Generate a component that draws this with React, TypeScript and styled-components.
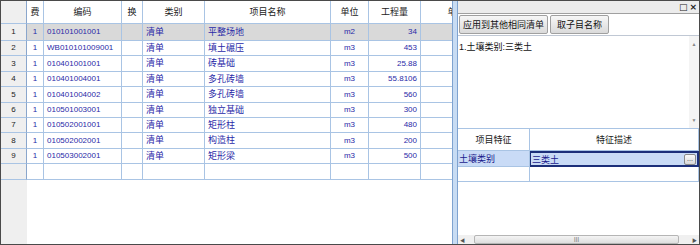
import React from "react";
import styled, { createGlobalStyle } from "styled-components";

const gridLine = "#a9c4e4";
const cellBlue = "#2a2aa8";

const GlobalStyle = createGlobalStyle`
  html, body {
    margin: 0;
    padding: 0;
    background: #ffffff;
  }
  body {
    font-family: "Liberation Sans", "Noto Sans CJK SC", sans-serif;
    font-size: 9px;
  }
`;

const Frame = styled.div`
  width: 700px;
  height: 245px;
  box-sizing: border-box;
  border: 1px solid #4a4a4a;
  display: flex;
  overflow: hidden;
  background: #ffffff;
`;

const GridPane = styled.div`
  width: 451px;
  flex-shrink: 0;
  display: flex;
  flex-direction: column;
  overflow: hidden;
`;

const Row = styled.div<{ $h: number; $selected?: boolean }>`
  display: flex;
  height: ${(p) => p.$h}px;
  flex-shrink: 0;
  background: ${(p) => (p.$selected ? "#d9d9d9" : "#ffffff")};
`;

const Cell = styled.div<{
  $w: number;
  $align?: string;
  $header?: boolean;
  $gutter?: boolean;
  $latin?: boolean;
}>`
  width: ${(p) => p.$w}px;
  flex-shrink: 0;
  box-sizing: border-box;
  border-right: 1px solid ${gridLine};
  border-bottom: 1px solid ${gridLine};
  display: flex;
  align-items: center;
  justify-content: ${(p) => p.$align || "flex-start"};
  padding: 0 3px;
  font-size: ${(p) => (p.$latin ? 8 : 9)}px;
  line-height: 1;
  white-space: nowrap;
  overflow: hidden;
  color: ${(p) => (p.$header || p.$gutter ? "#222222" : cellBlue)};
  background: ${(p) => (p.$gutter ? "#efefef" : "transparent")};
  ${(p) => (p.$gutter ? "border-right-color: #8aa6cc;" : "")}
`;

const Filler = styled.div`
  flex: 1;
  display: flex;
`;

const GutterFill = styled.div`
  width: 26px;
  background: #efefef;
`;

const Splitter = styled.div`
  width: 6px;
  flex-shrink: 0;
  background: #c8dcf3;
  border-left: 1px solid #7fa3d0;
  border-right: 1px solid #7fa3d0;
  box-sizing: border-box;
`;

const SidePane = styled.div`
  flex: 1;
  display: flex;
  flex-direction: column;
  min-width: 0;
`;

const TitleBar = styled.div`
  height: 12px;
  flex-shrink: 0;
  background: #ececec;
  border-bottom: 1px solid #a0a0a0;
  display: flex;
  justify-content: flex-end;
  align-items: center;
  gap: 2px;
  padding-right: 2px;
`;

const TitleIcon = styled.span`
  font-family: "DejaVu Sans", sans-serif;
  font-size: 9px;
  font-weight: bold;
  color: #222;
  line-height: 1;
`;

const ButtonBar = styled.div`
  height: 21px;
  flex-shrink: 0;
  display: flex;
  align-items: center;
  gap: 2px;
  padding: 0 0 0 1px;
  border-bottom: 1px solid #c0c8d4;
`;

const ToolButton = styled.div<{ $w: number }>`
  width: ${(p) => p.$w}px;
  height: 19px;
  box-sizing: border-box;
  border: 1px solid #a0a0a0;
  border-radius: 2px;
  background: linear-gradient(#f7f7f7, #dadada);
  display: flex;
  align-items: center;
  justify-content: center;
  font-size: 9px;
  white-space: nowrap;
  color: #111;
`;

const Memo = styled.div`
  height: 92px;
  flex-shrink: 0;
  display: flex;
  border-bottom: 1px solid ${gridLine};
`;

const MemoText = styled.div`
  flex: 1;
  padding: 4px 1px;
  font-size: 9px;
  color: #111;
`;

const VScroll = styled.div`
  width: 10px;
  background: #f4f4f4;
  display: flex;
  flex-direction: column;
  justify-content: space-between;
  align-items: center;
  padding: 5px 0;
  font-size: 5px;
  color: #888;
`;

const FeatRow = styled.div<{ $h: number; $selected?: boolean }>`
  display: flex;
  height: ${(p) => p.$h}px;
  flex-shrink: 0;
  background: ${(p) => (p.$selected ? "#c9dbf6" : "#ffffff")};
`;

const FeatCell = styled.div<{ $w?: number; $align?: string; $edit?: boolean; $header?: boolean }>`
  ${(p) => (p.$w ? `width: ${p.$w}px; flex-shrink: 0;` : "flex: 1;")}
  box-sizing: border-box;
  border-right: 1px solid ${gridLine};
  border-bottom: 1px solid ${gridLine};
  display: flex;
  align-items: center;
  justify-content: ${(p) => p.$align || "flex-start"};
  padding: 0 1px;
  font-size: 9px;
  color: ${(p) => (p.$header ? "#222" : "#1a1a8c")};
  ${(p) => (p.$edit ? "border: 2px solid #1c2f7a; border-left-width: 1px;" : "")}
`;

const EllipsisBtn = styled.div`
  margin-left: auto;
  width: 12px;
  height: 11px;
  box-sizing: border-box;
  border: 1px solid #8a8a8a;
  border-radius: 2px;
  background: linear-gradient(#fafafa, #d8d8d8);
  font-size: 7px;
  line-height: 7px;
  text-align: center;
  color: #333;
`;

const SideFill = styled.div`
  flex: 1;
`;

const HScroll = styled.div`
  height: 9px;
  flex-shrink: 0;
  display: flex;
  align-items: center;
  background: #f0f0f0;
  font-size: 5px;
  color: #555;
  padding: 0 2px;
  gap: 3px;
`;

const HThumb = styled.div`
  flex: 1;
  height: 7px;
  margin: 0 10px 0 6px;
  border: 1px solid #b5b5b5;
  border-radius: 2px;
  background: linear-gradient(#f4f4f4, #dedede);
  display: flex;
  align-items: center;
  justify-content: center;
  font-size: 6px;
  color: #777;
`;

const widths = [26, 17, 78, 21, 62, 126, 38, 52, 72];

const rows = [
  ["010101001001", "平整场地", "m2", "34"],
  ["WB010101009001", "填土碾压", "m3", "453"],
  ["010401001001", "砖基础", "m3", "25.88"],
  ["010401004001", "多孔砖墙", "m3", "55.8106"],
  ["010401004002", "多孔砖墙", "m3", "560"],
  ["010501003001", "独立基础", "m3", "300"],
  ["010502001001", "矩形柱", "m3", "480"],
  ["010502002001", "构造柱", "m3", "200"],
  ["010503002001", "矩形梁", "m3", "500"],
];

const rowHeights = [17, 15, 16, 15, 16, 15, 15, 16, 15];

export default function App() {
  return (
    <>
      <GlobalStyle />
      <Frame>
        <GridPane>
          <Row $h={23}>
            <Cell $w={widths[0]} $gutter />
            <Cell $w={widths[1]} $header $align="center">费</Cell>
            <Cell $w={widths[2]} $header $align="center">编码</Cell>
            <Cell $w={widths[3]} $header $align="center">换</Cell>
            <Cell $w={widths[4]} $header $align="center">类别</Cell>
            <Cell $w={widths[5]} $header $align="center">项目名称</Cell>
            <Cell $w={widths[6]} $header $align="center">单位</Cell>
            <Cell $w={widths[7]} $header $align="center">工程量</Cell>
            <Cell $w={widths[8]} $header $align="center">单价</Cell>
          </Row>
          {rows.map((r, i) => (
            <Row key={r[0]} $h={rowHeights[i]} $selected={i === 0}>
              <Cell $w={widths[0]} $gutter $latin $align="center">{i + 1}</Cell>
              <Cell $w={widths[1]} $latin $align="center">1</Cell>
              <Cell $w={widths[2]} $latin>{r[0]}</Cell>
              <Cell $w={widths[3]} />
              <Cell $w={widths[4]}>清单</Cell>
              <Cell $w={widths[5]}>{r[1]}</Cell>
              <Cell $w={widths[6]} $latin $align="center">{r[2]}</Cell>
              <Cell $w={widths[7]} $latin $align="flex-end">{r[3]}</Cell>
              <Cell $w={widths[8]} />
            </Row>
          ))}
          <Row $h={16}>
            {widths.map((w, i) => (
              <Cell key={i} $w={w} $gutter={i === 0} />
            ))}
          </Row>
          <Filler>
            <GutterFill />
          </Filler>
        </GridPane>
        <Splitter />
        <SidePane>
          <TitleBar>
            <TitleIcon>□</TitleIcon>
            <TitleIcon>×</TitleIcon>
          </TitleBar>
          <ButtonBar>
            <ToolButton $w={89}>应用到其他相同清单</ToolButton>
            <ToolButton $w={59}>取子目名称</ToolButton>
          </ButtonBar>
          <Memo>
            <MemoText>1.土壤类别:三类土</MemoText>
            <VScroll>
              <span>▲</span>
              <span>▼</span>
            </VScroll>
          </Memo>
          <FeatRow $h={22}>
            <FeatCell $w={72} $header $align="center">项目特征</FeatCell>
            <FeatCell $header $align="center">特征描述</FeatCell>
          </FeatRow>
          <FeatRow $h={16} $selected>
            <FeatCell $w={72}>土壤类别</FeatCell>
            <FeatCell $edit>
              三类土
              <EllipsisBtn>...</EllipsisBtn>
            </FeatCell>
          </FeatRow>
          <FeatRow $h={15}>
            <FeatCell $w={72} />
            <FeatCell />
          </FeatRow>
          <SideFill />
          <HScroll>
            <span>◀</span>
            <HThumb>Ⅲ</HThumb>
            <span>▶</span>
          </HScroll>
        </SidePane>
      </Frame>
    </>
  );
}
